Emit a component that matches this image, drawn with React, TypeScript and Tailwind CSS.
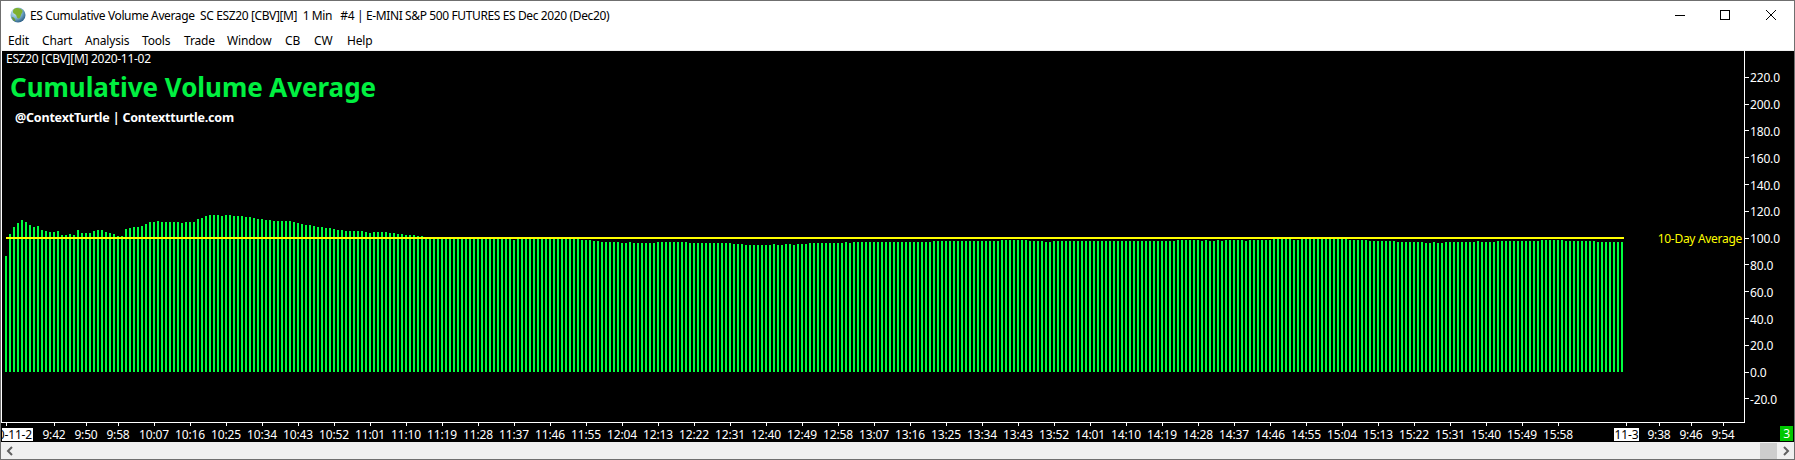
import React from "react";

const UI_FONT = "font-['Noto_Sans','Open_Sans',sans-serif]";

const menuItems = [
  { label: "Edit", cls: "w-[34px]" },
  { label: "Chart", cls: "w-[43px]" },
  { label: "Analysis", cls: "w-[57px]" },
  { label: "Tools", cls: "w-[42px]" },
  { label: "Trade", cls: "w-[43px]" },
  { label: "Window", cls: "w-[58px]" },
  { label: "CB", cls: "w-[29px]" },
  { label: "CW", cls: "w-[33px]" },
  { label: "Help", cls: "w-[40px]" },
];

const yLabels = ["220.0", "200.0", "180.0", "160.0", "140.0", "120.0", "100.0", "80.0", "60.0", "40.0", "20.0", "0.0", "-20.0"];

const earlyTimes = ["9:42", "9:50", "9:58"];
const lateTimes = ["9:38", "9:46", "9:54"];

// every 9 minutes from 10:07 up to 15:58
const regularTimes: string[] = [];
for (let m = 10 * 60 + 7; m <= 15 * 60 + 58; m += 9) {
  regularTimes.push(`${Math.floor(m / 60)}:${String(m % 60).padStart(2, "0")}`);
}

// bar tops in page pixels, read from the chart
const headTops = [
  256, 234, 227, 223, 220, 222, 225, 227, 226, 230, 231, 232, 232, 231, 235, 235, 234, 235, 230, 233, 233, 233, 231, 230, 230,
  232, 233, 234, 236, 236, 229, 228, 227, 227, 226, 224, 222, 222, 221, 222, 222, 222, 222, 222, 223, 222, 222, 222, 219,
  218, 216, 215, 215, 215, 216, 215, 215, 216, 216, 216, 217, 217, 218, 219, 219, 220, 220, 221, 221, 221, 221, 221, 222, 223,
  224, 225, 225, 226, 227, 227, 228, 228, 229, 230, 230, 231, 231, 231, 231, 231, 232, 233, 232, 232, 232, 232, 233, 233, 234,
  234, 235, 235, 235, 236, 236, 238, 238,
];

const tailRuns: [number, number][] = [
  [20, 238], [1, 240], [16, 238], [3, 240], [2, 241], [5, 242], [2, 243], [1, 242], [6, 243], [8, 242], [11, 243], [3, 244],
  [7, 245], [1, 244], [2, 245], [2, 244], [1, 245], [3, 244], [6, 243],
  [3, 243], [1, 242], [1, 243], [20, 242], [17, 241], [7, 240], [4, 241], [2, 242], [31, 241], [6, 240], [1, 241], [1, 240],
  [2, 241], [1, 240], [1, 241], [2, 240],
  [3, 240], [1, 241], [6, 240], [5, 238], [2, 240], [12, 238], [5, 240], [7, 241], [7, 242], [2, 243], [1, 242], [2, 243],
  [8, 242], [1, 241], [4, 242], [11, 241], [6, 240], [8, 241], [7, 242],
];

const barTops = [...headTops, ...tailRuns.flatMap(([count, top]) => Array<number>(count).fill(top))];

function GlobeIcon() {
  return (
    <svg width="16" height="16" viewBox="0 0 16 16" className="shrink-0">
      <defs>
        <radialGradient id="globe" cx="0.35" cy="0.3" r="0.8">
          <stop offset="0" stopColor="#e4f2f8" />
          <stop offset="0.5" stopColor="#7fb4d2" />
          <stop offset="1" stopColor="#1c4f78" />
        </radialGradient>
      </defs>
      <circle cx="8" cy="8" r="7.5" fill="url(#globe)" />
      <path d="M5 1.500c3-1 6 0 7.500 2 .5 2-1 2.500-1.500 4.500s-1.500 4-3 3.500-1-3-2.500-4S2.500 6 3 4s1-2 2-2.500z" fill="#7fb030" />
      <path d="M2 10c1.500 0 2.500 1 3 2.500s.5 2-.5 1.500S2 12 2 10z" fill="#6c9a2e" />
    </svg>
  );
}

function TitleBar() {
  return (
    <div className="flex h-[28px] items-center bg-white pl-[9px]">
      <GlobeIcon />
      <span className="ml-[4px] mt-[2px] whitespace-pre text-[12px] tracking-[-0.38px] text-black">
        ES Cumulative Volume Average{"  "}SC ESZ20 [CBV][M]{"  "}1 Min{"   "}#4 | E-MINI S&amp;P 500 FUTURES ES Dec 2020 (Dec20)
      </span>
      <div className="ml-auto flex items-center pr-[18px]">
        <svg width="10" height="10" viewBox="0 0 10 10" className="mr-[35px]">
          <path d="M0 5.500h10" stroke="#000" strokeWidth="1" />
        </svg>
        <svg width="10" height="10" viewBox="0 0 10 10" className="mr-[36px]">
          <rect x="0.500" y="0.500" width="9" height="9" fill="none" stroke="#000" strokeWidth="1" />
        </svg>
        <svg width="10" height="10" viewBox="0 0 10 10">
          <path d="M0 0l10 10M10 0L0 10" stroke="#000" strokeWidth="1" />
        </svg>
      </div>
    </div>
  );
}

function MenuBar() {
  return (
    <div className="flex h-[22px] items-start border-b border-[#f0f0f0] bg-white pl-[7px] pt-[2px] text-[12px] leading-[20px] tracking-[-0.17px] text-black">
      {menuItems.map((item) => (
        <span key={item.label} className={item.cls}>
          {item.label}
        </span>
      ))}
    </div>
  );
}

function Plot() {
  return (
    <div className="relative flex-1 border-x border-b border-white">
      {/* viewBox keeps page coordinates, the plot starts at 2,51 */}
      <svg width="1742" height="371" viewBox="2 51 1742 371" className="block">
        {barTops.map((top, k) => (
          <rect key={k} x={5 + 4 * k} y={top} width="2" height={372 - top} fill="#00ff40" />
        ))}
        <rect x="6" y="237" width="1618" height="2" fill="#ffff00" />
      </svg>

      <div className="absolute left-[4px] top-0 text-[12px] leading-[16px] tracking-[-0.29px] text-white">ESZ20 [CBV][M] 2020-11-02</div>
      <div className="absolute left-[8px] top-[16px] whitespace-nowrap text-[26px] font-bold leading-[40px] tracking-[-0.05px] text-[#00f040]">
        Cumulative Volume Average
      </div>
      <div className="absolute left-[13px] top-[58px] whitespace-nowrap text-[12.5px] font-bold leading-[18px] tracking-[-0.2px] text-white">
        @ContextTurtle | Contextturtle.com
      </div>
      <div className="absolute right-[2px] top-[179px] whitespace-nowrap text-[12px] leading-[18px] tracking-[-0.3px] text-[#ffff00]">
        10-Day Average
      </div>
    </div>
  );
}

function YAxis() {
  return (
    <div className="flex w-[49px] flex-col pt-[13px] text-[12px] tracking-[-0.17px] text-white">
      {yLabels.map((label) => (
        <div key={label} className="flex h-[26.8px] items-center">
          <div className="h-px w-[4px] bg-white" />
          <span className="ml-[1px] mt-[2px]">{label}</span>
        </div>
      ))}
    </div>
  );
}

function TimeCell({ label, cls }: { label: string; cls: string }) {
  return (
    <div className={`flex flex-col items-center ${cls}`}>
      <div className="h-[3px] w-px bg-white" />
      <span className="mt-[2px] whitespace-nowrap leading-[13px]">{label}</span>
    </div>
  );
}

function XAxis() {
  return (
    <div className="flex h-[19px] text-[12px] tracking-[-0.17px] text-white">
      <div className="ml-px flex w-[36px] flex-col">
        <div className="ml-[4px] h-[3px] w-px bg-white" />
        <div className="mt-[2px] flex h-[13px] w-[31px] justify-end overflow-hidden bg-white pr-px leading-[13px] text-black">
          <span className="whitespace-nowrap">0-11-2</span>
        </div>
      </div>
      {earlyTimes.map((t) => (
        <TimeCell key={t} label={t} cls="w-[32px]" />
      ))}
      <div className="w-[2px]" />
      {regularTimes.map((t) => (
        <TimeCell key={t} label={t} cls="w-[36px]" />
      ))}
      <div className="ml-[34px] flex w-[33px] flex-col items-center">
        <div className="h-[3px] w-px bg-white" />
        <div className="mt-[2px] h-[13px] w-[25px] bg-white text-center leading-[13px] text-black">11-3</div>
      </div>
      {lateTimes.map((t) => (
        <TimeCell key={t} label={t} cls="w-[32px]" />
      ))}
      <div className="mb-px mr-px ml-auto h-[15px] w-[13px] self-end bg-[#00c800] text-center leading-[15px] text-white">3</div>
    </div>
  );
}

function ScrollBar() {
  return (
    <div className="flex h-[17px] items-center bg-[#f0f0f0]">
      <svg width="8" height="10" viewBox="0 0 8 10" className="ml-[5px]">
        <path d="M6 1L2 5l4 4" fill="none" stroke="#606060" strokeWidth="2" />
      </svg>
      <div className="ml-auto h-[16px] w-[17px] self-end bg-[#cdcdcd]" />
      <svg width="8" height="10" viewBox="0 0 8 10" className="ml-[5px] mr-[4px]">
        <path d="M2 1l4 4-4 4" fill="none" stroke="#606060" strokeWidth="2" />
      </svg>
    </div>
  );
}

export default function App() {
  return (
    <div className={`flex h-[460px] w-[1795px] flex-col overflow-hidden border border-[#6f6f6f] bg-white ${UI_FONT}`}>
      <TitleBar />
      <MenuBar />
      <div className="flex h-[391px] flex-col bg-black">
        <div className="flex h-[372px]">
          <Plot />
          <YAxis />
        </div>
        <XAxis />
      </div>
      <ScrollBar />
    </div>
  );
}
